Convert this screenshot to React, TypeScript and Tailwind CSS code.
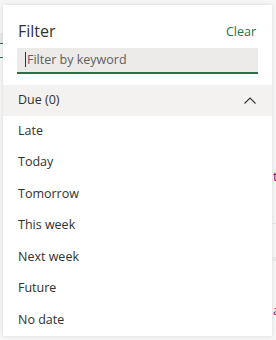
import React from 'react';

const items = ['Late', 'Today', 'Tomorrow', 'This week', 'Next week', 'Future', 'No date'];

const ChevronUp = () => (
    <svg width="12" height="7" viewBox="0 0 12 7" fill="none" stroke="#323130" strokeWidth="1.1">
        <path d="M0.5 6.5 L6 1 L11.5 6.5" />
    </svg>
);

export default function App() {
    return (
        <div className="flex w-[276px] h-[340px] overflow-hidden bg-[#f7f7f7] font-['Open_Sans',sans-serif]">
            {/* page behind, left edge */}
            <div className="w-[3px] shrink-0 flex flex-col pt-[33px]">
                <div className="h-[10px] bg-[#e9e9e9]" />
                <div className="h-[1px] bg-[#217346]" />
                <div className="h-[13px]" />
                <div className="h-[1px] bg-[#217346]" />
            </div>

            <div className="w-[269px] shrink-0 mt-[5px] h-[331px] bg-white shadow-[0_0_5px_rgba(0,0,0,0.13)] flex flex-col">
                <div className="flex items-center justify-between px-[15px] pt-[14px]">
                    <span className="text-[16px] leading-[20px] text-[#323130]">Filter</span>
                    <span className="text-[12.5px] leading-[20px] text-[#217346] pr-[1px] pt-[3px]">Clear</span>
                </div>
                <div className="mx-[14px] mt-[6px] h-[27px] bg-[#edebe9] border-b-[2px] border-[#217346] flex items-center pl-[8px]">
                    <span className="w-[1px] h-[15px] bg-[#323130] mr-[1px]" />
                    <span className="text-[12.5px] text-[#605e5c]">Filter by keyword</span>
                </div>
                <div className="mt-[11px] h-[32px] bg-[#f3f2f1] flex items-center justify-between pl-[15px] pr-[16px]">
                    <span className="text-[12.5px] text-[#323130]">Due (0)</span>
                    <ChevronUp />
                </div>
                <div className="flex flex-col">
                    {items.map((item) => (
                        <div key={item} className="h-[31.5px] flex items-center pl-[15px] text-[12.5px] text-[#323130]">
                            {item}
                        </div>
                    ))}
                </div>
            </div>

            {/* page behind, right edge */}
            <div className="w-[4px] shrink-0 flex flex-col pt-[168px] overflow-hidden text-[13px] leading-[16px]">
                <span className="pl-[1px] text-[#4b2a6b]">t</span>
                <div className="h-[39px]" />
                <div className="h-[1px] bg-[#e1e1e1]" />
                <div className="h-[33px]" />
                <div className="h-[4px] bg-[#e6e6e6]" />
                <div className="h-[41px]" />
                <span className="pl-[1px] text-[#6b2a4b]">a</span>
            </div>
        </div>
    );
}
